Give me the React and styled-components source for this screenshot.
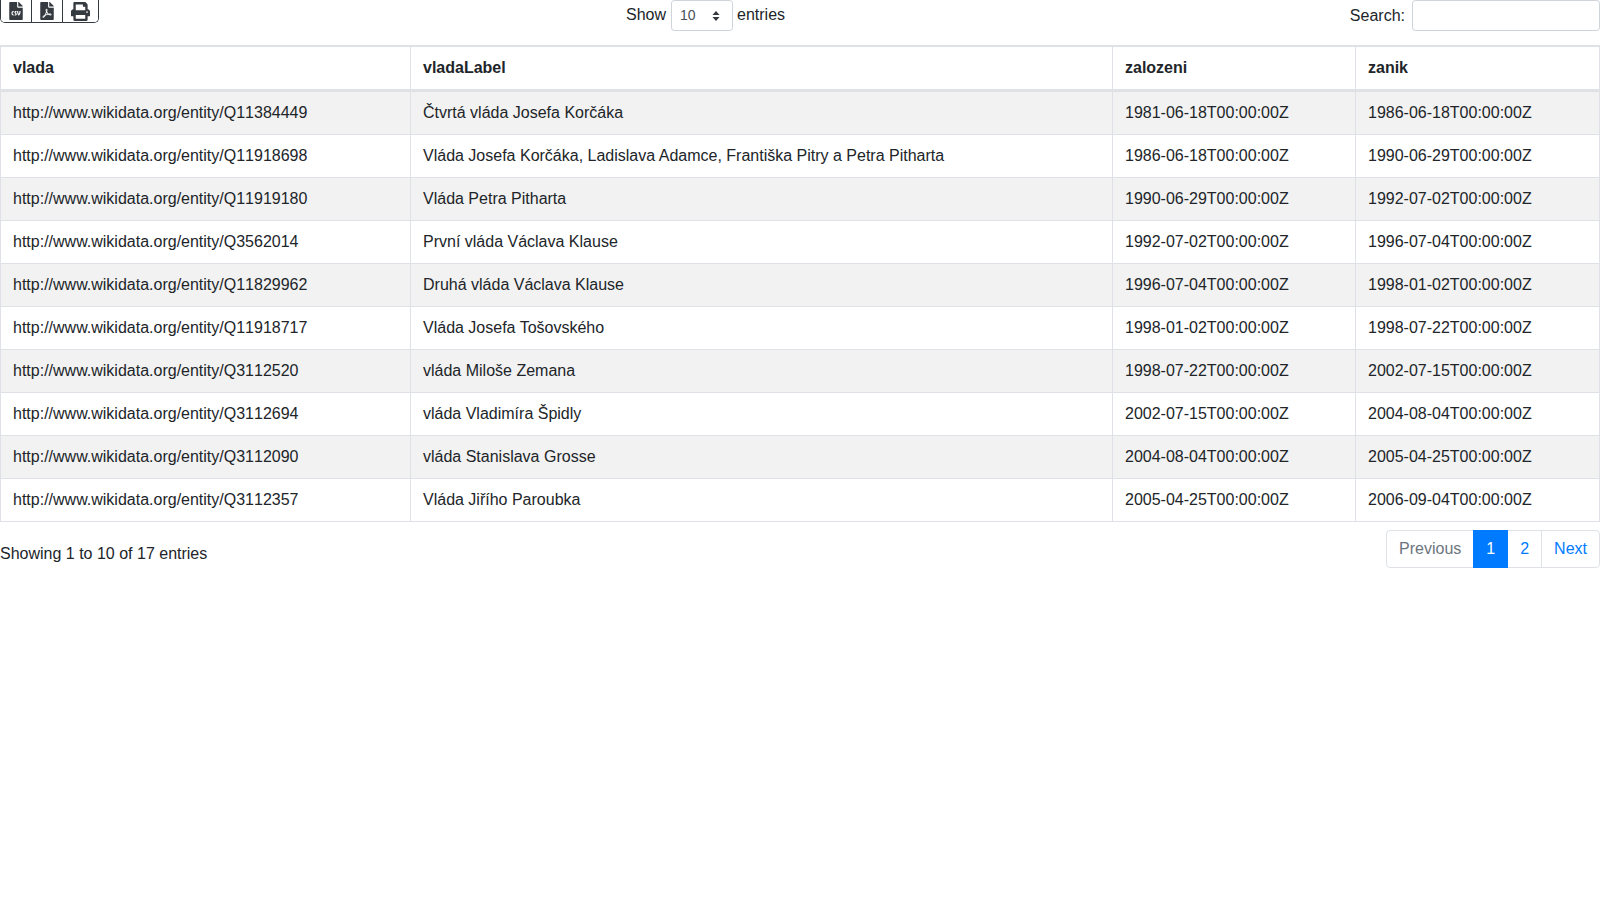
import { FaFileCsv, FaFilePdf, FaPrint } from "react-icons/fa"
import styled, { createGlobalStyle } from "styled-components"

const GlobalStyle = createGlobalStyle`
  html, body {
    margin: 0;
    background: #fff;
    color: #212529;
    font-family: "Liberation Sans", Arial, sans-serif;
    font-size: 16px;
    line-height: 24px;
    -webkit-font-smoothing: antialiased;
  }
  * { box-sizing: border-box; }
`

const Toolbar = styled.div`
  display: grid;
  grid-template-columns: 626px 1fr auto;
  height: 45px;
`
const ButtonGroup = styled.div`
  display: inline-flex;
  align-self: start;
  justify-self: start;
  height: 23px;
  border: 1px solid #343a40;
  border-top: 0;
  border-radius: 0 0 5px 5px;
  overflow: hidden;
`
const IconButton = styled.button`
  display: flex;
  align-items: center;
  justify-content: center;
  width: ${props => props.$w}px;
  padding: 0;
  border: 0;
  border-left: ${props => (props.$first ? "0" : "1px solid #343a40")};
  background: #fff;
  color: #343a40;
  font-size: ${props => props.$size}px;
`
const LengthLabel = styled.label`
  display: flex;
  align-items: flex-start;
  gap: 5px;
  padding-top: 3px;
  align-self: start;
`
const LengthSelect = styled.div`
  position: relative;
  width: 62px;
  height: 31px;
  margin: -3px -1px 0 0;
  padding: 4px 8px;
  border: 1px solid #ced4da;
  border-radius: 3.2px;
  color: #495057;
  font-size: 14px;
  line-height: 21px;
`
const Caret = styled.svg`
  position: absolute;
  right: 12px;
  top: 10px;
  width: 8px;
  height: 10px;
  fill: #343a40;
`
const SearchLabel = styled.label`
  display: flex;
  align-items: flex-start;
  gap: 7px;
  align-self: start;
  padding-top: 4px;
`
const SearchInput = styled.input`
  width: 188px;
  height: 31px;
  margin-top: -4px;
  padding: 4px 8px;
  border: 1px solid #ced4da;
  border-radius: 3.2px;
  font-size: 14px;
  background: #fff;
`
const Table = styled.table`
  width: 1600px;
  table-layout: fixed;
  border-collapse: separate;
  border-spacing: 0;
  border: 1px solid #dee2e6;
  border-right: 0;
  color: #212529;
`
const Th = styled.th`
  width: ${props => props.$w}px;
  padding: 9px 12px;
  border-top: 1px solid #dee2e6;
  border-right: 1px solid #dee2e6;
  border-bottom: 3px solid #dee2e6;
  text-align: left;
  font-weight: 700;
`
const Row = styled.tr`
  background: ${props => (props.$odd ? "#f2f2f2" : "#fff")};
`
const Td = styled.td`
  padding: 9px 12px;
  border-right: 1px solid #dee2e6;
  border-top: ${props => (props.$first ? "0" : "1px solid #dee2e6")};
  white-space: nowrap;
`
const EntityId = styled.span`
  font-kerning: none;
`
const Footer = styled.div`
  display: flex;
  justify-content: space-between;
  align-items: flex-start;
  margin-top: 8px;
`
const Info = styled.div`
  padding-top: 12px;
`
const Pagination = styled.ul`
  display: flex;
  margin: 0;
  padding: 0;
  list-style: none;
`
const PageLink = styled.li`
  padding: 8px 12px;
  margin-left: ${props => (props.$first ? "0" : "-1px")};
  border: 1px solid ${props => (props.$active ? "#007bff" : "#dee2e6")};
  background: ${props => (props.$active ? "#007bff" : "#fff")};
  color: ${props => (props.$active ? "#fff" : props.$disabled ? "#6c757d" : "#007bff")};
  line-height: 20px;
  position: relative;
  z-index: ${props => (props.$active ? 1 : 0)};
  border-radius: ${props => (props.$first ? "4px 0 0 4px" : props.$last ? "0 4px 4px 0" : "0")};
`

const rows = [
  ["Q11384449", "Čtvrtá vláda Josefa Korčáka", "1981-06-18T00:00:00Z", "1986-06-18T00:00:00Z"],
  ["Q11918698", "Vláda Josefa Korčáka, Ladislava Adamce, Františka Pitry a Petra Pitharta", "1986-06-18T00:00:00Z", "1990-06-29T00:00:00Z"],
  ["Q11919180", "Vláda Petra Pitharta", "1990-06-29T00:00:00Z", "1992-07-02T00:00:00Z"],
  ["Q3562014", "První vláda Václava Klause", "1992-07-02T00:00:00Z", "1996-07-04T00:00:00Z"],
  ["Q11829962", "Druhá vláda Václava Klause", "1996-07-04T00:00:00Z", "1998-01-02T00:00:00Z"],
  ["Q11918717", "Vláda Josefa Tošovského", "1998-01-02T00:00:00Z", "1998-07-22T00:00:00Z"],
  ["Q3112520", "vláda Miloše Zemana", "1998-07-22T00:00:00Z", "2002-07-15T00:00:00Z"],
  ["Q3112694", "vláda Vladimíra Špidly", "2002-07-15T00:00:00Z", "2004-08-04T00:00:00Z"],
  ["Q3112090", "vláda Stanislava Grosse", "2004-08-04T00:00:00Z", "2005-04-25T00:00:00Z"],
  ["Q3112357", "Vláda Jiřího Paroubka", "2005-04-25T00:00:00Z", "2006-09-04T00:00:00Z"],
]

export default function App() {
  return (
    <>
      <GlobalStyle />
      <Toolbar>
        <ButtonGroup>
          <IconButton $first $w={30} $size={18}><FaFileCsv /></IconButton>
          <IconButton $w={31} $size={18}><FaFilePdf /></IconButton>
          <IconButton $w={36} $size={19}><FaPrint /></IconButton>
        </ButtonGroup>
        <LengthLabel>
          Show
          <LengthSelect>
            10
            <Caret viewBox="0 0 9 11"><path d="M4.5 0 8.5 4.5H.5ZM4.5 11 .5 6.5H8.5Z" /></Caret>
          </LengthSelect>
          entries
        </LengthLabel>
        <SearchLabel>
          Search:
          <SearchInput type="search" />
        </SearchLabel>
      </Toolbar>
      <Table>
        <thead>
          <tr>
            <Th $w={410}>vlada</Th>
            <Th $w={702}>vladaLabel</Th>
            <Th $w={243}>zalozeni</Th>
            <Th $w={244}>zanik</Th>
          </tr>
        </thead>
        <tbody>
          {rows.map(([id, label, from, to], i) => (
            <Row key={id} $odd={i % 2 === 0}>
              <Td $first={i === 0}>http://www.wikidata.org/entity/<EntityId>{id}</EntityId></Td>
              <Td $first={i === 0}>{label}</Td>
              <Td $first={i === 0}>{from}</Td>
              <Td $first={i === 0}>{to}</Td>
            </Row>
          ))}
        </tbody>
      </Table>
      <Footer>
        <Info>Showing 1 to 10 of 17 entries</Info>
        <Pagination>
          <PageLink $first $disabled>Previous</PageLink>
          <PageLink $active>1</PageLink>
          <PageLink>2</PageLink>
          <PageLink $last>Next</PageLink>
        </Pagination>
      </Footer>
    </>
  )
}
